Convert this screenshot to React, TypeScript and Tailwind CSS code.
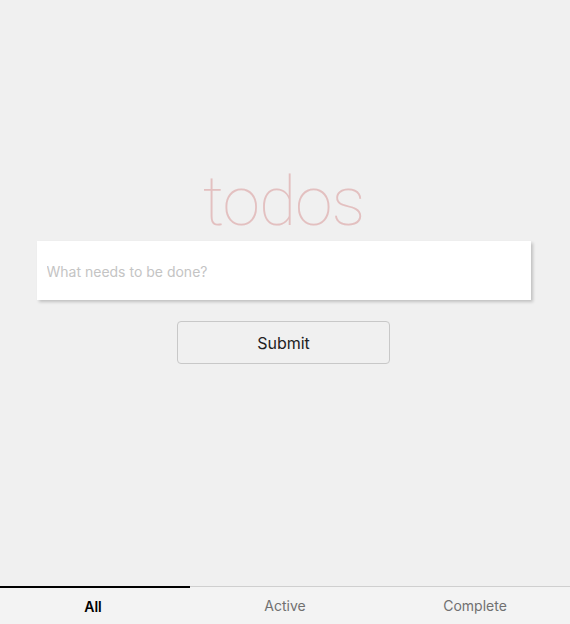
import React, { useState } from 'react';

const tabs = ['All', 'Active', 'Complete'];

export default function App() {
    const [active, setActive] = useState('All');
    const [text, setText] = useState('');

    return (
        <div className="flex h-screen flex-col bg-[#f0f0f0] font-['Liberation_Sans',sans-serif]">
            <div className="flex flex-1 flex-col items-center pr-[3px] pt-[164px]">
                <h1 className="font-['Roboto',sans-serif] text-[68px] font-thin leading-[77px] tracking-[-1px] text-[#e3c0c0]">
                    todos
                </h1>
                <div className="w-[494px] bg-white shadow-[2px_2px_3px_rgba(0,0,0,0.2)]">
                    <input
                        value={text}
                        onChange={(e) => setText(e.target.value)}
                        placeholder="What needs to be done?"
                        className="h-[59px] w-full bg-transparent px-[10px] pt-[1px] font-['Inter',sans-serif] text-[14px] text-[#333] outline-none placeholder:text-[#c4c4c4]"
                    />
                </div>
                <button className="mt-[21px] h-[43px] w-[213px] rounded-[4px] border border-[#c8c8c8] font-['Inter',sans-serif] text-[16px] text-[#222]">
                    Submit
                </button>
            </div>
            <div className="grid h-[38px] grid-cols-3 border-t border-[#cfcfcf] bg-[#f3f3f3]">
                {tabs.map((tab) => (
                    <button
                        key={tab}
                        onClick={() => setActive(tab)}
                        className={`-mt-px flex items-center justify-center pt-[1px] font-['Inter',sans-serif] text-[14px] ${active === tab ? 'border-t-2 border-black pr-[4px] font-semibold text-black' : 'text-[#707070]'}`}
                    >
                        {tab}
                    </button>
                ))}
            </div>
        </div>
    );
}
